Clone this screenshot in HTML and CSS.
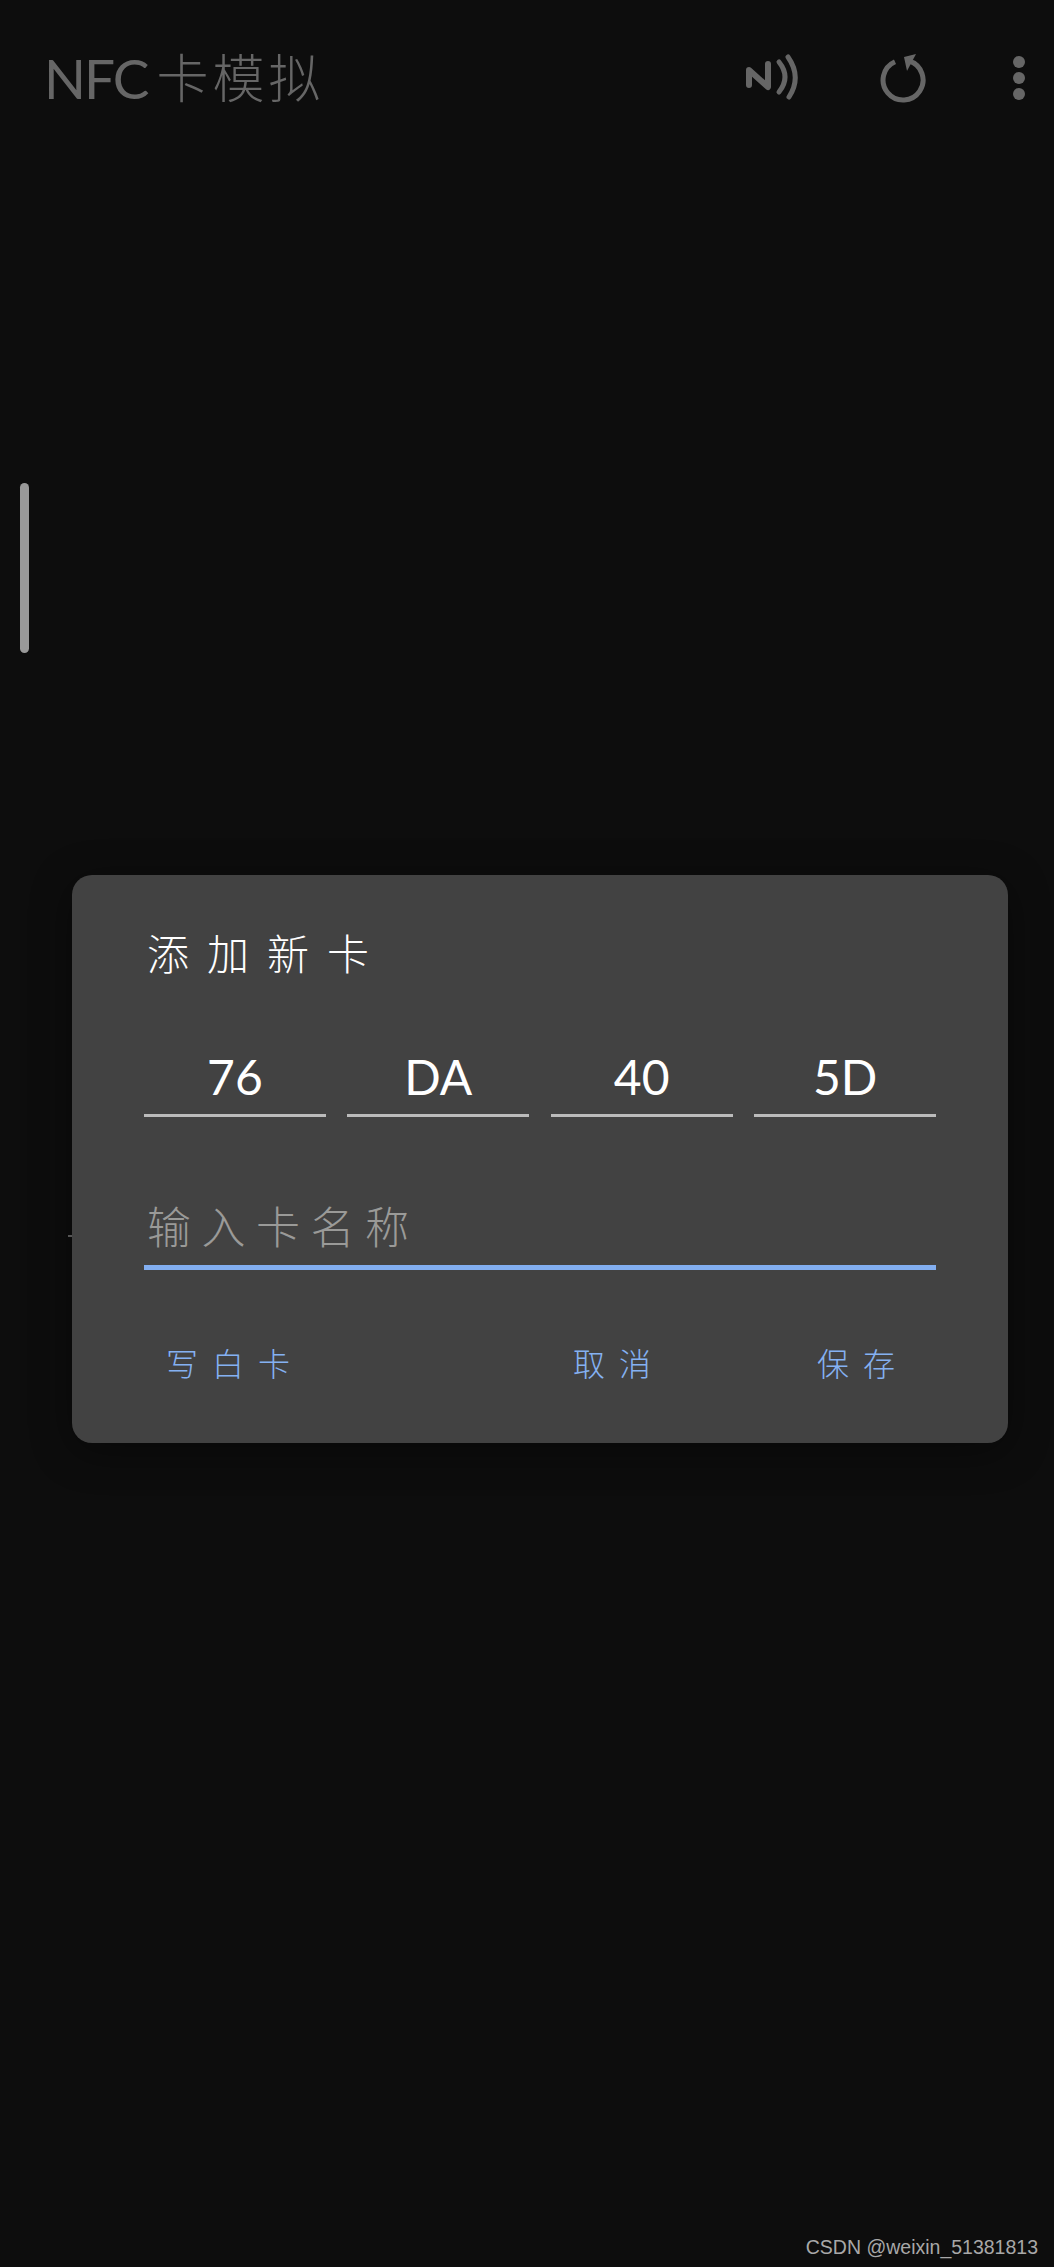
FILE: index.html
```html
<!DOCTYPE html>
<html lang="zh-CN">
<head>
    <meta charset="UTF-8">
    <meta name="viewport" content="width=device-width, initial-scale=1.0">
    <title>NFC卡模拟</title>
    <link rel="stylesheet" href="styles.css">
</head>
<body>

    <!-- App bar, dimmed behind the dialog -->
    <header class="appbar">
        <div class="app-title"><span class="app-latin">NFC</span><span class="app-cjk">卡模拟</span></div>
        <svg class="icon-nfc" viewBox="0 0 55 50" width="55" height="50" fill="none" stroke="#666" stroke-width="5" stroke-linecap="round" stroke-linejoin="round">
            <path d="M4 32 L4 17 L23 34 L23 11" stroke-width="6"/>
            <path d="M34 9 Q46 24 34 39"/>
            <path d="M43 4 Q57 24 44 44"/>
        </svg>
        <svg class="icon-refresh" viewBox="0 0 50 52" width="50" height="52" fill="none">
            <path d="M17 9.7 A20 20 0 1 0 31 8.9" stroke="#666" stroke-width="5"/>
            <path d="M38 2 L26 5 L29 19 Z" fill="#666"/>
        </svg>
        <div class="icon-more">
            <span class="dot"></span>
            <span class="dot"></span>
            <span class="dot"></span>
        </div>
    </header>

    <div class="scroll-thumb"></div>
    <div class="edge-mark"></div>

    <!-- Add card dialog -->
    <div class="dialog">
        <div class="dialog-title">添加新卡</div>

        <div class="uid-row">
            <div class="uid-field">76</div>
            <div class="uid-field">DA</div>
            <div class="uid-field">40</div>
            <div class="uid-field">5D</div>
        </div>

        <div class="name-field">输入卡名称</div>

        <div class="dialog-actions">
            <div class="action action-left">写白卡</div>
            <div class="action">取消</div>
            <div class="action">保存</div>
        </div>
    </div>

    <div class="watermark">CSDN @weixin_51381813</div>

</body>
</html>
```

FILE: styles.css
```css
body {
    margin: 0;
    height: 2267px;
    background-color: #0d0d0d;
    font-family: "Lato", "Noto Sans CJK SC", sans-serif;
    overflow: hidden;
    position: relative;
}
.appbar {
    display: flex;
    align-items: center;
    height: 156px;
    padding: 0 29px 0 44px;
    box-sizing: border-box;
}
.app-title {
    display: flex;
    align-items: center;
    color: #666;
    margin-right: auto;
}
.app-latin {
    font-family: "Lato", sans-serif;
    font-size: 55px;
    line-height: 1;
    letter-spacing: -2px;
}
.app-cjk {
    font-family: "Noto Sans CJK SC", sans-serif;
    font-size: 52px;
    font-weight: 300;
    letter-spacing: 4px;
    margin-left: 9px;
    margin-top: -6px;
}
.icon-nfc {
    margin-right: 78px;
}
.icon-refresh {
    margin-right: 85px;
}
.icon-more {
    display: flex;
    flex-direction: column;
    gap: 4px;
}
.dot {
    width: 12px;
    height: 12px;
    border-radius: 50%;
    background-color: #666;
}
.scroll-thumb {
    position: absolute;
    left: 20px;
    top: 483px;
    width: 9px;
    height: 170px;
    border-radius: 5px;
    background-color: #999;
}
.edge-mark {
    position: absolute;
    left: 68px;
    top: 1235px;
    width: 4px;
    height: 2px;
    background-color: #555;
}
.dialog {
    margin: 719px 46px 0 72px;
    padding: 47px 72px 56px;
    background-color: #424242;
    border-radius: 20px;
    box-shadow: 0 8px 40px rgba(0, 0, 0, 0.4);
}
.dialog-title {
    font-family: "Noto Sans CJK SC", sans-serif;
    font-size: 42px;
    font-weight: 300;
    line-height: 60px;
    letter-spacing: 18px;
    padding-left: 3px;
    color: #fff;
}
.uid-row {
    display: flex;
    gap: 21.5px;
    margin-top: 58px;
}
.uid-field {
    flex: 1;
    height: 74px;
    line-height: 74px;
    font-size: 48px;
    text-align: center;
    color: #fff;
    border-bottom: 3px solid #bbb;
}
.name-field {
    margin-top: 73px;
    height: 75px;
    line-height: 71px;
    padding-left: 3px;
    font-family: "Noto Sans CJK SC", sans-serif;
    font-size: 44px;
    font-weight: 300;
    letter-spacing: 10.5px;
    color: #9a9a98;
    border-bottom: 5px solid #82aef0;
}
.dialog-actions {
    display: flex;
    gap: 152px;
    margin-top: 67px;
    padding: 0 27px 0 22px;
}
.action {
    font-family: "Noto Sans CJK SC", sans-serif;
    font-size: 32px;
    font-weight: 300;
    line-height: 50px;
    letter-spacing: 14px;
    color: #85b1f2;
}
.action-left {
    margin-right: auto;
}
.watermark {
    position: absolute;
    right: 16px;
    top: 2235px;
    font-family: "Liberation Sans", sans-serif;
    font-size: 19.5px;
    line-height: 24px;
    color: #a8a8a8;
}
```
